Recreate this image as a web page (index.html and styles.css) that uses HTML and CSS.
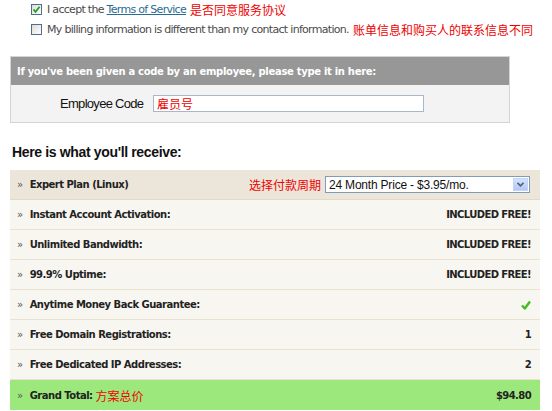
FILE: index.html
```html
<!DOCTYPE html>
<html>
<head>
<meta charset="utf-8">
<link rel="stylesheet" href="styles.css">
</head>
<body>
<div class="terms">
  <div class="chk-row">
    <span class="cb"><svg width="9" height="9" viewBox="0 0 9 9"><path d="M1.5 4.5 L3.5 6.8 L7.6 1.8" fill="none" stroke="#21a121" stroke-width="1.8"/></svg></span>
    <span class="en">I accept the <a class="tos" href="#">Terms of Service</a></span>
    <span class="cn">是否同意服务协议</span>
  </div>
  <div class="chk-row">
    <span class="cb"></span>
    <span class="en">My billing information is different than my contact information.</span>
    <span class="cn">账单信息和购买人的联系信息不同</span>
  </div>
</div>

<div class="code-box">
  <div class="code-head">If you've been given a code by an employee, please type it in here:</div>
  <div class="code-body">
    <span class="code-label">Employee Code</span>
    <div class="code-input"><span class="cn">雇员号</span></div>
  </div>
</div>

<h2 class="receive">Here is what you'll receive:</h2>

<div class="table">
  <div class="row plan">
    <div class="name"><span class="raquo">»</span>Expert Plan (Linux)</div>
    <div class="val">
      <span class="cn cn-sel">选择付款周期</span>
      <div class="select"><span class="sel-text">24 Month Price - $3.95/mo.</span><span class="sel-btn"><svg width="7" height="5" viewBox="0 0 7 5"><path d="M0.5 0.8 L3.5 3.8 L6.5 0.8" fill="none" stroke="#4d6185" stroke-width="1.6"/></svg></span></div>
    </div>
  </div>
  <div class="row"><div class="name"><span class="raquo">»</span>Instant Account Activation:</div><div class="val">INCLUDED FREE!</div></div>
  <div class="row"><div class="name"><span class="raquo">»</span>Unlimited Bandwidth:</div><div class="val">INCLUDED FREE!</div></div>
  <div class="row"><div class="name"><span class="raquo">»</span>99.9% Uptime:</div><div class="val">INCLUDED FREE!</div></div>
  <div class="row"><div class="name"><span class="raquo">»</span>Anytime Money Back Guarantee:</div><div class="val"><svg class="check" width="10" height="10" viewBox="0 0 10 10"><path d="M1 5.5 L3.8 8.5 L9 1.5" fill="none" stroke="#3fbf1f" stroke-width="2.4" stroke-linejoin="round"/></svg></div></div>
  <div class="row"><div class="name"><span class="raquo">»</span>Free Domain Registrations:</div><div class="val">1</div></div>
  <div class="row"><div class="name"><span class="raquo">»</span>Free Dedicated IP Addresses:</div><div class="val">2</div></div>
  <div class="row total"><div class="name"><span class="raquo">»</span>Grand Total: <span class="cn cn-total">方案总价</span></div><div class="val">$94.80</div></div>
</div>
</body>
</html>
```

FILE: styles.css
```css
html, body {
  margin: 0;
  padding: 0;
  background: #ffffff;
}
body {
  font-family: "Liberation Sans", Arial, sans-serif;
  color: #333;
}
.terms {
  padding-left: 31px;
  display: flex;
  flex-direction: column;
  gap: 1px;
}
.chk-row {
  height: 19px;
  display: flex;
  align-items: center;
  color: #4a4a4a;
}
.cb {
  width: 11px;
  height: 11px;
  border: 1px solid #4e6d92;
  box-sizing: border-box;
  background: linear-gradient(135deg, #dcdcd6, #ffffff);
  display: inline-flex;
  align-items: center;
  justify-content: center;
  margin-right: 5px;
}
.en { font-family: "DejaVu Sans", Verdana, sans-serif; font-size: 11px; letter-spacing: -0.7px; }
.tos { color: #2a6b93; text-decoration: underline; }
.cn {
  font-family: "Noto Sans CJK SC", sans-serif;
  color: #f00000;
  letter-spacing: 0;
  font-size: 12px;
  font-weight: normal;
  margin-left: 4px;
}
.code-box {
  margin: 17px 0 0 10px;
  width: 500px;
  border: 1px solid #d4d4d4;
  box-sizing: border-box;
}
.code-head {
  height: 28px;
  background: #979797;
  color: #fff;
  font-family: "DejaVu Sans", Verdana, sans-serif;
  font-weight: bold;
  font-size: 10px;
  letter-spacing: -0.3px;
  display: flex;
  align-items: center;
  padding-left: 6px;
}
.code-body {
  height: 37px;
  background: #f3f3f3;
  display: flex;
  align-items: center;
  padding-left: 49px;
}
.code-label {
  font-size: 13px;
  letter-spacing: -0.7px;
  color: #111;
  width: 93px;
}
.code-input {
  width: 271px;
  height: 17px;
  box-sizing: border-box;
  border: 1px solid #a5b8cc;
  background: #fff;
  display: flex;
  align-items: center;
}
.code-input .cn { margin-left: 3px; font-size: 12px; }
.receive {
  margin: 19px 0 0 12px;
  font-size: 14px;
  font-weight: bold;
  letter-spacing: -0.35px;
  color: #111;
  height: 20px;
  line-height: 20px;
}
.table {
  margin: 8px 0 0 10px;
  width: 530px;
}
.row {
  height: 29px;
  border-bottom: 1px solid #e9e2ce;
  background: #f8f6f0;
  display: flex;
  align-items: center;
  justify-content: space-between;
  font-family: "DejaVu Sans", Verdana, sans-serif;
  font-weight: bold;
  font-size: 10px;
  letter-spacing: -0.5px;
  color: #222;
  padding: 0 9px 0 7px;
}
.row.plan { background: #ece6da; border-bottom-color: #e2dac6; }
.row.total { background: #9de87c; border-bottom: none; height: 30px; }
.raquo {
  font-weight: normal;
  color: #555;
  margin-right: 7px;
  font-size: 10px;
}
.name { display: flex; align-items: center; }
.val { display: flex; align-items: center; }
.val:not(:has(*)) { letter-spacing: -0.6px; }
.cn-sel { font-size: 12px; margin-right: 4px; }
.cn-total { font-size: 12px; margin-left: 3px; }
.select {
  width: 205px;
  height: 17px;
  box-sizing: border-box;
  border: 1px solid #7f9db9;
  background: #fff;
  display: flex;
  align-items: center;
  justify-content: space-between;
  font-family: "Liberation Sans", Arial, sans-serif;
  font-weight: normal;
  font-size: 12px;
  letter-spacing: -0.2px;
  color: #111;
  margin-right: 1px;
}
.sel-text { padding-left: 3px; }
.sel-btn {
  width: 15px;
  height: 13px;
  margin-right: 1px;
  background: linear-gradient(#d6e2fb, #b4c8f5);
  border: 1px solid #c3d3fd;
  box-sizing: border-box;
  display: flex;
  align-items: center;
  justify-content: center;
}
.check { margin-right: 0; }
```
